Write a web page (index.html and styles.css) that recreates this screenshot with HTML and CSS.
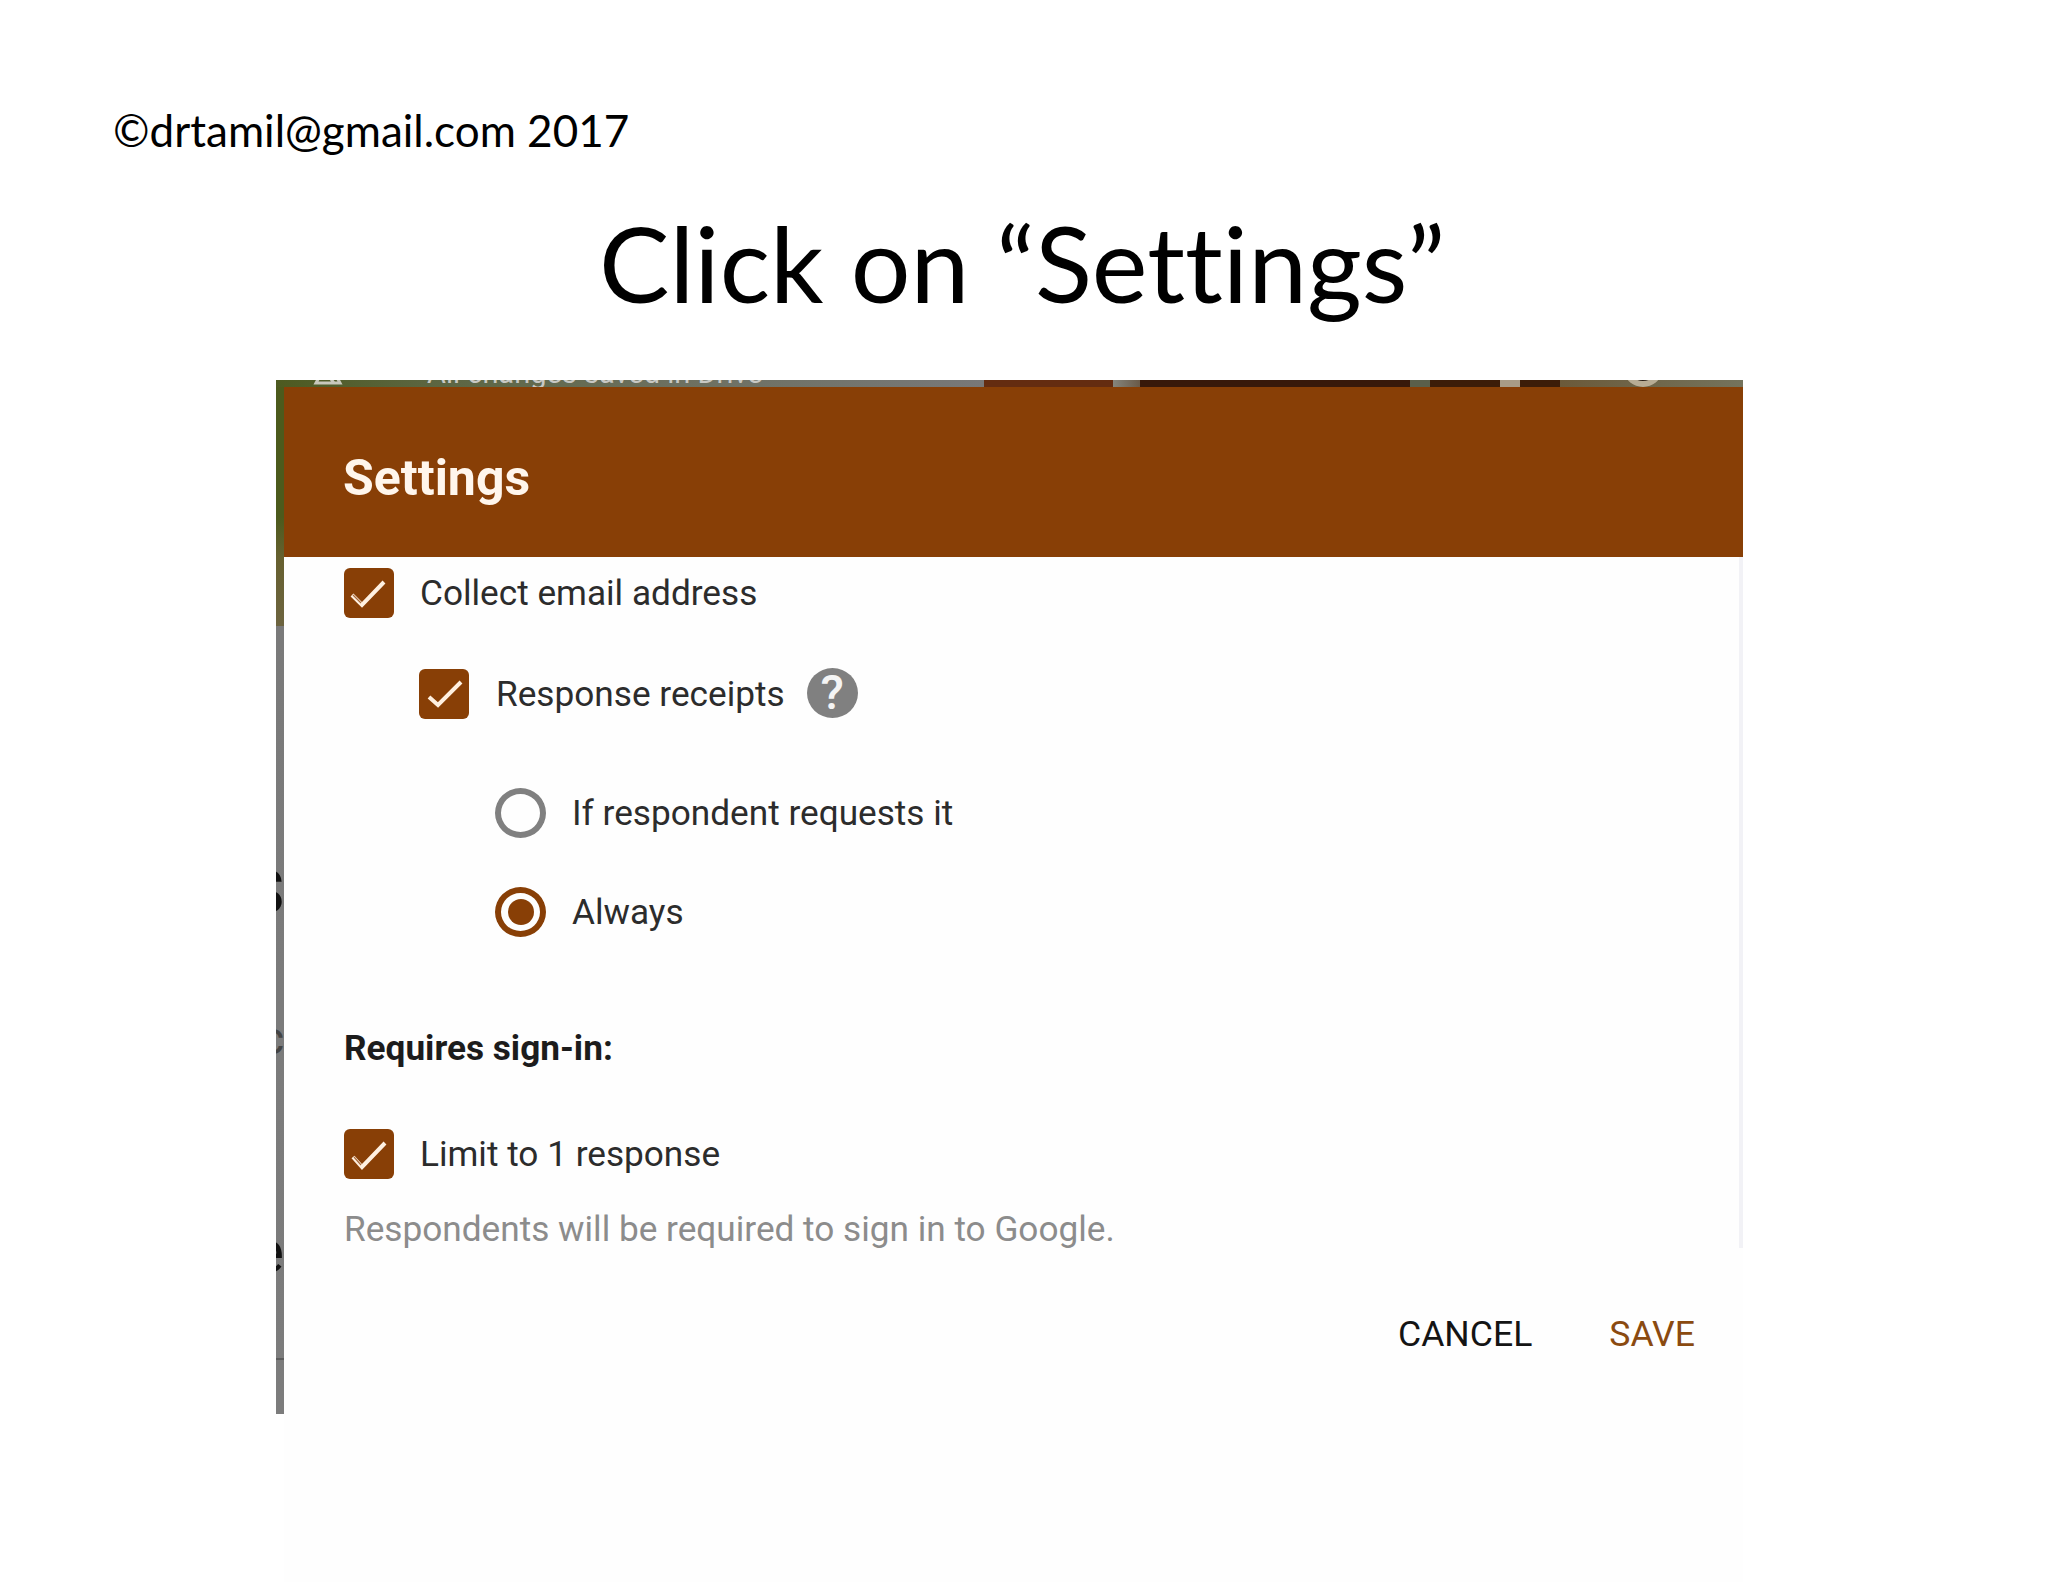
FILE: index.html
```html
<!DOCTYPE html>
<html>
<head>
    <link rel="stylesheet" href="styles.css">
</head>
<body>
    <div class="slide">
        <div class="copyright">©drtamil@gmail.com 2017</div>
        <h1 class="slide-title">Click on “Settings”</h1>

        <div class="shot">
            <!-- What is left of the page behind the dialog -->
            <div class="shot-top">
                <svg class="shot-top-icon" width="30" height="20" viewBox="0 0 30 20">
                    <path d="M3 16 L15 -6 L27 16 Z M9 0 L21 16" fill="none" stroke="#c8c8bc" stroke-width="3"/>
                </svg>
                <span class="shot-top-text">All changes saved in Drive</span>
                <span class="shot-top-avatar"></span>
            </div>

            <div class="shot-body">
                <div class="shot-edge">
                    <span class="edge-letter edge-s">S</span>
                    <span class="edge-letter edge-c">c</span>
                    <span class="edge-letter edge-e">e</span>
                    <span class="edge-tick"></span>
                </div>

                <div class="dialog">
                    <div class="dialog-header">Settings</div>

                    <div class="dialog-content">
                        <div class="option option-first">
                            <span class="checkbox">
                                <svg width="50" height="50" viewBox="0 0 50 50">
                                    <path class="check" d="M8 27 L18 37 L40 14"/>
                                    <path class="check-core" d="M9 27 L17 35"/>
                                </svg>
                            </span>
                            <span class="option-label">Collect email address</span>
                        </div>

                        <div class="option option-receipts">
                            <span class="checkbox">
                                <svg width="50" height="50" viewBox="0 0 50 50">
                                    <path class="check" d="M10 28 L19 36 L42 13"/>
                                </svg>
                            </span>
                            <span class="option-label">Response receipts</span>
                            <span class="help">?</span>
                        </div>

                        <div class="option option-radio option-radio-first">
                            <span class="radio"></span>
                            <span class="option-label">If respondent requests it</span>
                        </div>

                        <div class="option option-radio option-radio-second">
                            <span class="radio radio-on"><span class="radio-dot"></span></span>
                            <span class="option-label">Always</span>
                        </div>

                        <div class="section-title">Requires sign-in:</div>

                        <div class="option option-limit">
                            <span class="checkbox">
                                <svg width="50" height="50" viewBox="0 0 50 50">
                                    <path class="check" d="M9 28 L18 38 L41 14"/>
                                    <path class="check-core" d="M10 28 L17 36"/>
                                </svg>
                            </span>
                            <span class="option-label">Limit to 1 response</span>
                        </div>

                        <div class="hint">Respondents will be required to sign in to Google.</div>
                    </div>

                    <div class="dialog-actions">
                        <span class="action">CANCEL</span>
                        <span class="action action-save">SAVE</span>
                    </div>
                </div>
            </div>
        </div>
    </div>
</body>
</html>
```

FILE: styles.css
```css
* {
    margin: 0;
    padding: 0;
    box-sizing: border-box;
}

body {
    background: #ffffff;
    color: #000000;
    font-family: Lato, "Liberation Sans", sans-serif;
    font-variant-ligatures: none;
    overflow: hidden;
}

.slide {
    width: 2048px;
    height: 1582px;
    overflow: hidden;
}

.copyright {
    padding: 102px 0 0 113px;
    font-size: 44px;
    line-height: 56px;
}

.slide-title {
    margin-top: 45px;
    margin-left: 599px;
    font-size: 105.5px;
    font-weight: 400;
    line-height: 118px;
    white-space: nowrap;
}

/* Screenshot of the dialog */
.shot {
    position: relative;
    margin-top: 59px;
    margin-left: 276px;
    width: 1467px;
    font-family: Roboto, "Liberation Sans", sans-serif;
}

.shot-top {
    display: flex;
    height: 7px;
    overflow: hidden;
    background: linear-gradient(90deg,
        #4d5a20 0, #5b6540 150px, #6d7060 400px, #787878 708px,
        #642c10 708px, #642c10 837px,
        #85857c 837px, #6a5a48 864px,
        #38190a 864px, #38190a 1134px,
        #5a5f4a 1134px, #5a5f4a 1154px,
        #3c1c08 1154px, #3c1c08 1224px,
        #a89c86 1224px, #a89c86 1244px,
        #3c1c08 1244px, #3c1c08 1284px,
        #6b5a3a 1284px, #74735c 1467px);
}

.shot-top-icon {
    margin: -13px 0 0 37px;
    flex-shrink: 0;
}

.shot-top-text {
    margin: -24px 0 0 84px;
    font-size: 29px;
    line-height: 34px;
    color: #c8c8c4;
    white-space: nowrap;
}

.shot-top-avatar {
    width: 36px;
    height: 30px;
    margin: -23px 82px 0 auto;
    border: 6px solid #b8ac94;
    border-radius: 50%;
    background: #2a2018;
}

.shot-body {
    display: flex;
    align-items: flex-start;
}

.shot-edge {
    width: 8px;
    height: 1027px;
    flex-shrink: 0;
    display: flex;
    flex-direction: column;
    align-items: flex-end;
    overflow: hidden;
    background: linear-gradient(180deg,
        #4c5a1c 0, #4c5a1c 130px, #66602f 170px, #6d6440 239px, #7a7a7a 239px, #7c7c7c 1027px);
}

.edge-letter {
    display: block;
    height: 46px;
    line-height: 46px;
    width: 40px;
    flex-shrink: 0;
    color: #111111;
    text-align: right;
}

.edge-s {
    margin-top: 482px;
    font-size: 62px;
}

.edge-c {
    margin-top: 100px;
    font-size: 46px;
    color: #444444;
}

.edge-e {
    margin-top: 168px;
    font-size: 60px;
}

.edge-tick {
    width: 8px;
    height: 2px;
    margin-top: 83px;
    flex-shrink: 0;
    background: #5c5c5c;
}

.dialog {
    flex: 1;
    background: #fefefe;
}

.dialog-header {
    height: 170px;
    padding: 62px 0 0 59px;
    background: #883f06;
    color: #fff6ec;
    font-size: 50px;
    font-weight: 700;
    line-height: 58px;
}

.dialog-content {
    height: 691px;
    padding-left: 60px;
    overflow: hidden;
    border-right: 4px solid #f2f2f6;
    font-size: 35.2px;
    color: #2c2c2c;
}

.option {
    display: flex;
    align-items: center;
    gap: 26px;
    height: 50px;
    line-height: 50px;
}

.option-first {
    margin-top: 11px;
}

.option-receipts {
    margin-top: 51px;
    margin-left: 75px;
    gap: 27px;
}

.option-radio {
    margin-left: 151px;
}

.option-radio-first {
    margin-top: 69px;
}

.option-radio-second {
    margin-top: 49px;
}

.option-limit {
    margin-top: 56px;
}

.checkbox {
    width: 50px;
    height: 50px;
    flex-shrink: 0;
    border-radius: 6px;
    background: #883f06;
}

.checkbox svg {
    display: block;
}

.check {
    fill: none;
    stroke: #fff0e0;
    stroke-width: 4;
}

.check-core {
    fill: none;
    stroke: #a86a3c;
    stroke-width: 1.2;
}

.help {
    width: 51px;
    height: 50px;
    margin: -2px 0 0 -5px;
    flex-shrink: 0;
    border-radius: 50%;
    background: #808080;
    color: #f4f4f4;
    font-size: 48px;
    font-weight: 500;
    line-height: 50px;
    text-align: center;
}

.radio {
    display: flex;
    align-items: center;
    justify-content: center;
    width: 51px;
    height: 50px;
    flex-shrink: 0;
    border: 6px solid #808080;
    border-radius: 50%;
}

.radio-on {
    border-color: #883f06;
}

.radio-dot {
    width: 26px;
    height: 26px;
    border-radius: 50%;
    background: #883f06;
}

.section-title {
    margin-top: 86px;
    height: 50px;
    font-weight: 700;
    line-height: 50px;
    color: #1c1c1c;
}

.hint {
    margin-top: 25px;
    height: 50px;
    line-height: 50px;
    color: #8c8c8c;
    white-space: nowrap;
}

.dialog-actions {
    display: flex;
    justify-content: flex-end;
    gap: 77px;
    height: 334px;
    padding: 61px 48px 0 0;
    font-size: 35.6px;
    line-height: 50px;
    color: #141414;
}

.action-save {
    color: #8a4a10;
}
```
